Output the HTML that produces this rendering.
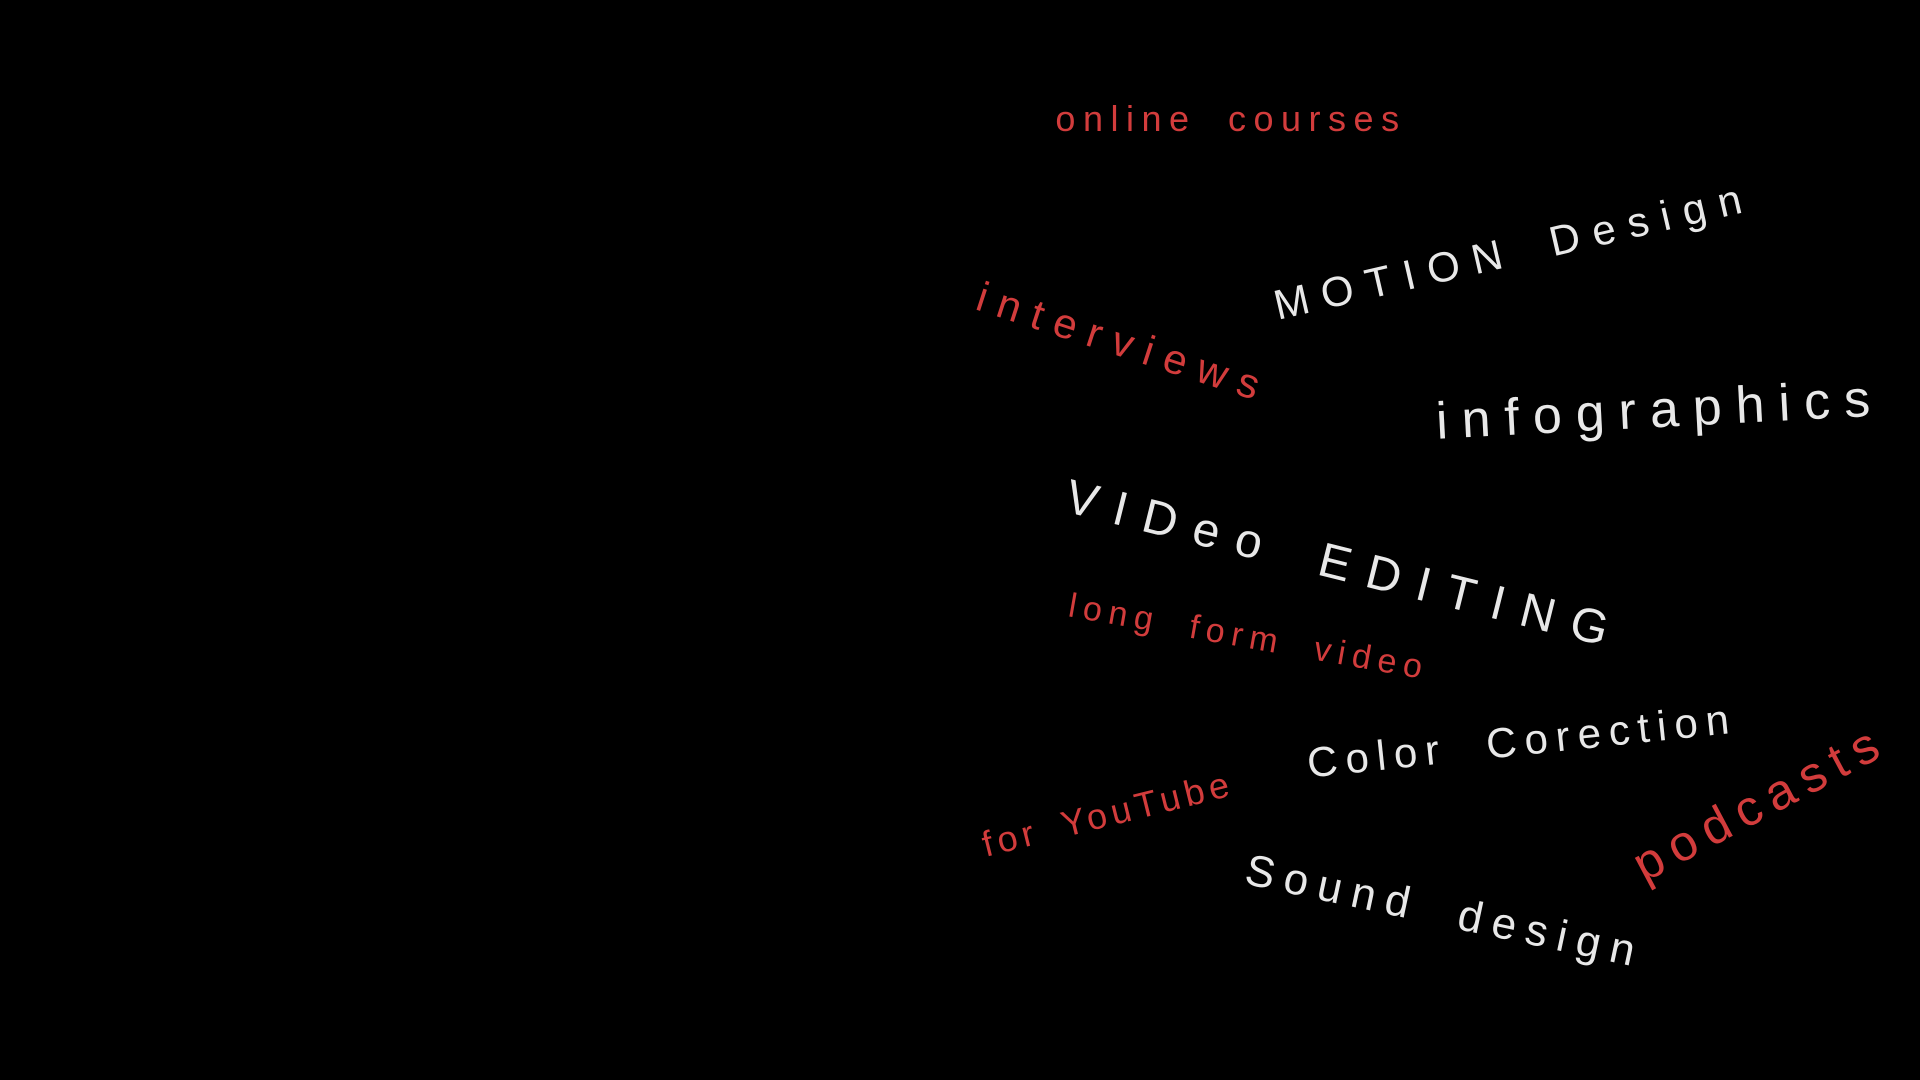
<!DOCTYPE html>
<html><head><meta charset="utf-8"><style>
html,body{margin:0;padding:0;background:#000;width:1920px;height:1080px;overflow:hidden}
span{position:absolute;white-space:nowrap;font-family:"Liberation Sans","DejaVu Sans",sans-serif;transform-origin:center;line-height:1}
.r{color:#d23c3c}.w{color:#e8e8e8}
</style></head><body>
<span class="r" style="left:1231px;top:119px;font-size:36px;letter-spacing:7.5px;word-spacing:14px;transform:translate(-50%,-50%)">online courses</span>
<span class="w" style="left:1514px;top:251px;font-size:42px;letter-spacing:13px;word-spacing:12px;transform:translate(-50%,-50%) rotate(-13deg)">MOTION Design</span>
<span class="r" style="left:1124px;top:343px;font-size:42px;letter-spacing:12px;transform:translate(-50%,-50%) rotate(18deg)">interviews</span>
<span class="w" style="left:1660px;top:410px;font-size:52px;letter-spacing:14px;transform:translate(-50%,-50%) rotate(-3deg)">infographics</span>
<span class="w" style="left:1345px;top:566px;font-size:48px;letter-spacing:17px;word-spacing:12px;transform:translate(-50%,-50%) rotate(14deg)">VIDeo EDITING</span>
<span class="r" style="left:1249px;top:637px;font-size:34px;letter-spacing:7px;word-spacing:14px;transform:translate(-50%,-50%) rotate(10deg)">long form video</span>
<span class="w" style="left:1522px;top:741px;font-size:42px;letter-spacing:8px;word-spacing:20px;transform:translate(-50%,-50%) rotate(-6deg)">Color Corection</span>
<span class="r" style="left:1108px;top:814px;font-size:36px;letter-spacing:5px;word-spacing:10px;transform:translate(-50%,-50%) rotate(-14deg)">for YouTube</span>
<span class="r" style="left:1760px;top:802px;font-size:50px;letter-spacing:10px;transform:translate(-50%,-50%) rotate(-28deg)">podcasts</span>
<span class="w" style="left:1445px;top:912px;font-size:44px;letter-spacing:10px;word-spacing:18px;transform:translate(-50%,-50%) rotate(12deg)">Sound design</span>
</body></html>
